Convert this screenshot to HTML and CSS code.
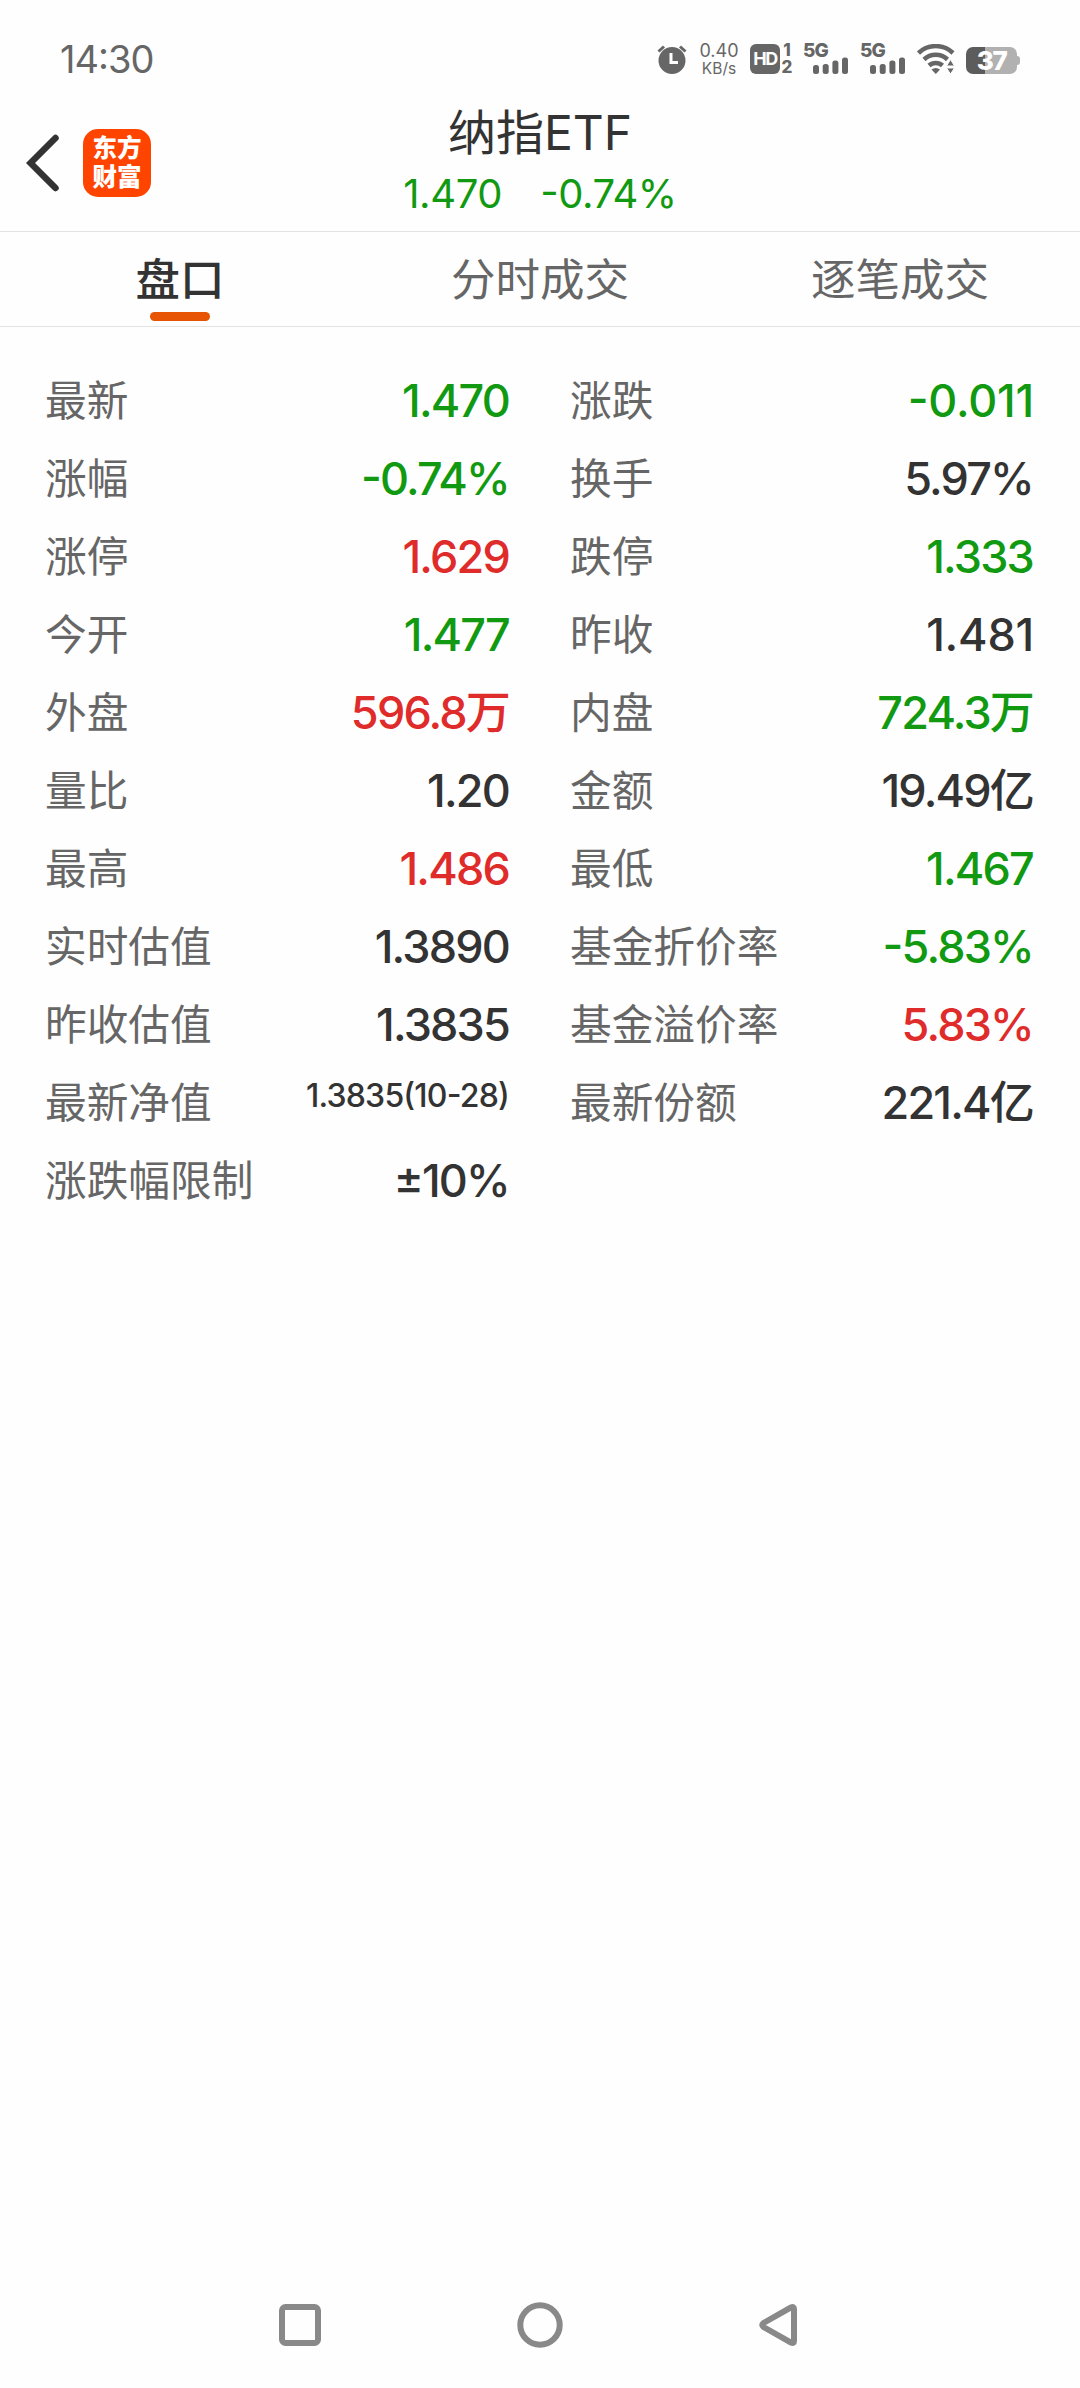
FILE: index.html
```
<!DOCTYPE html>
<html lang="zh-CN">
<head>
<meta charset="UTF-8">
<title>纳指ETF</title>
<link rel="stylesheet" href="styles.css">
</head>
<body>

  <div class="status-bar">
    <div class="time">14:30</div>
    <div class="status-icons">
      <svg class="alarm" width="30" height="30" viewBox="0 0 30 30">
        <circle cx="15" cy="16.5" r="13.5" fill="#666"/>
        <path d="M1.5 7.5L7 2.5M28.5 7.5L23 2.5" stroke="#666" stroke-width="3" fill="none"/>
        <path d="M14 9v9.5h7" stroke="#fff" stroke-width="3" fill="none"/>
      </svg>
      <div class="speed"><span class="speed-num">0.40</span><span class="speed-unit">KB/s</span></div>
      <div class="hd">HD</div>
      <div class="sims"><span>1</span><span>2</span></div>
      <div class="signal">
        <span class="net">5G</span>
        <svg width="36" height="17" viewBox="0 0 36 17" fill="#666">
          <rect x="0" y="8" width="6" height="9" rx="2.5"/>
          <rect x="9.7" y="7" width="6" height="10" rx="2.5"/>
          <rect x="19.4" y="3.5" width="6" height="13.5" rx="2.5"/>
          <rect x="29" y="0.5" width="6" height="16.5" rx="2.5"/>
        </svg>
      </div>
      <div class="signal">
        <span class="net">5G</span>
        <svg width="36" height="17" viewBox="0 0 36 17" fill="#666">
          <rect x="0" y="8" width="6" height="9" rx="2.5"/>
          <rect x="9.7" y="7" width="6" height="10" rx="2.5"/>
          <rect x="19.4" y="3.5" width="6" height="13.5" rx="2.5"/>
          <rect x="29" y="0.5" width="6" height="16.5" rx="2.5"/>
        </svg>
      </div>
      <svg class="wifi" width="38" height="30" viewBox="0 0 38 30" fill="none" stroke="#666" stroke-width="4.5">
        <path d="M1.5 9A25 25 0 0 1 36 9"/>
        <path d="M7 15.5A17 17 0 0 1 30.5 15.5"/>
        <path d="M12 21.5A10 10 0 0 1 25.5 21.5"/>
        <path d="M14.5 25.5q4.2 -3 8.5 0L18.8 30z" fill="#666" stroke="none"/>
        <path d="M29.5 22L33.5 15.5L37.5 22zM29.5 24L33.5 30L37.5 24z" fill="#666" stroke="#fff" stroke-width="1"/>
      </svg>
      <div class="battery"><span>37</span></div>
    </div>
  </div>

  <div class="header">
    <div class="header-left">
      <svg width="34" height="58" viewBox="0 0 34 58">
        <path d="M29.5 4L4.5 29L29.5 54" fill="none" stroke="#333" stroke-width="6.5" stroke-linecap="round"/>
      </svg>
      <div class="logo">东方<br>财富</div>
    </div>
    <div class="header-title">
      <div class="stock-name">纳指ETF</div>
      <div class="stock-price"><span>1.470</span><span>-0.74%</span></div>
    </div>
  </div>

  <div class="tabs">
    <div class="tab active"><span>盘口</span></div>
    <div class="tab"><span>分时成交</span></div>
    <div class="tab"><span>逐笔成交</span></div>
  </div>

  <div class="quote-list">
    <div class="item"><span class="label">最新</span><span class="value green">1.470</span></div>
    <div class="item"><span class="label">涨跌</span><span class="value green loose">-0.011</span></div>
    <div class="item"><span class="label">涨幅</span><span class="value green">-0.74%</span></div>
    <div class="item"><span class="label">换手</span><span class="value">5.97%</span></div>
    <div class="item"><span class="label">涨停</span><span class="value red">1.629</span></div>
    <div class="item"><span class="label">跌停</span><span class="value green">1.333</span></div>
    <div class="item"><span class="label">今开</span><span class="value green">1.477</span></div>
    <div class="item"><span class="label">昨收</span><span class="value loose">1.481</span></div>
    <div class="item"><span class="label">外盘</span><span class="value red">596.8万</span></div>
    <div class="item"><span class="label">内盘</span><span class="value green">724.3万</span></div>
    <div class="item"><span class="label">量比</span><span class="value">1.20</span></div>
    <div class="item"><span class="label">金额</span><span class="value">19.49亿</span></div>
    <div class="item"><span class="label">最高</span><span class="value red">1.486</span></div>
    <div class="item"><span class="label">最低</span><span class="value green">1.467</span></div>
    <div class="item"><span class="label">实时估值</span><span class="value">1.3890</span></div>
    <div class="item"><span class="label">基金折价率</span><span class="value green">-5.83%</span></div>
    <div class="item"><span class="label">昨收估值</span><span class="value">1.3835</span></div>
    <div class="item"><span class="label">基金溢价率</span><span class="value red">5.83%</span></div>
    <div class="item"><span class="label">最新净值</span><span class="value small">1.3835(10-28)</span></div>
    <div class="item"><span class="label">最新份额</span><span class="value">221.4亿</span></div>
    <div class="item"><span class="label">涨跌幅限制</span><span class="value">±10%</span></div>
  </div>

  <div class="nav-bar">
    <svg width="48" height="48" viewBox="0 0 48 48"><rect x="6" y="6" width="36" height="36" rx="3.5"/></svg>
    <svg width="48" height="48" viewBox="0 0 48 48"><circle cx="24" cy="24" r="19.7"/></svg>
    <svg width="48" height="48" viewBox="0 0 48 48"><path d="M7.5 22L35 6.5Q38 5 38 8V40Q38 43 35 41.5L7.5 26Q5 24 7.5 22z"/></svg>
  </div>

</body>
</html>
```
FILE: styles.css
```
* {
  box-sizing: border-box;
}
body {
  margin: 0;
  width: 1080px;
  height: 2388px;
  display: flex;
  flex-direction: column;
  background-color: #fefefe;
  color: #333;
  font-family: Inter, "Noto Sans CJK SC", sans-serif;
  font-feature-settings: "case";
}
svg {
  display: block;
  flex: none;
}

/* status bar */
.status-bar {
  height: 118px;
  padding: 0 60px;
  display: flex;
  justify-content: space-between;
  align-items: center;
  color: #666;
}
.time {
  font-size: 38px;
  letter-spacing: -1px;
}
.status-icons {
  display: flex;
  height: 30px;
  align-items: stretch;
}
.speed {
  width: 40px;
  margin: -2px 0 -4px 12px;
  display: flex;
  flex-direction: column;
  justify-content: space-between;
  align-items: center;
}
.speed-num {
  font-size: 18px;
  line-height: 18px;
}
.speed-unit {
  font-size: 15.5px;
  line-height: 18px;
}
.hd {
  width: 30px;
  margin-left: 11px;
  border-radius: 6px;
  background-color: #666;
  color: #fff;
  font-size: 18px;
  font-weight: 700;
  line-height: 30px;
  text-align: center;
  letter-spacing: -1.5px;
}
.sims {
  width: 12px;
  margin-left: 1px;
  display: flex;
  flex-direction: column;
  justify-content: space-between;
  align-items: center;
  font-size: 17px;
  font-weight: 800;
  line-height: 13px;
}
.signal {
  width: 46px;
  margin-left: 10px;
  display: flex;
  flex-direction: column;
  justify-content: space-between;
}
.signal + .signal {
  margin-left: 11px;
}
.net {
  height: 13px;
  font-size: 19px;
  font-weight: 800;
  letter-spacing: -1px;
  line-height: 14px;
}
.signal svg {
  align-self: flex-end;
}
.wifi {
  margin-left: 11px;
}
.battery {
  width: 51px;
  height: 27px;
  margin: 3px 3px 0 11px;
  border-radius: 7px;
  background: linear-gradient(to right, #5c5c5c 19px, #b1b1b1 19px);
  color: #fff;
  font-size: 26px;
  font-weight: 800;
  line-height: 28px;
  text-align: center;
  letter-spacing: -1.5px;
  position: relative;
}
.battery::after {
  content: "";
  position: absolute;
  left: 51px;
  top: 9px;
  width: 3px;
  height: 9px;
  border-radius: 0 3px 3px 0;
  background-color: #b1b1b1;
}

/* title */
.header {
  height: 114px;
  display: grid;
  grid-template-columns: 1fr 400px 1fr;
  border-bottom: 1px solid #e3e3e3;
}
.header-left {
  height: 90px;
  padding-left: 26px;
  display: flex;
  align-items: center;
  gap: 23px;
}
.logo {
  width: 68px;
  height: 68px;
  padding-top: 5px;
  border-radius: 15px;
  background-color: #ff4400;
  color: #fff;
  font-size: 24.5px;
  font-weight: 900;
  line-height: 29px;
  text-align: center;
}
.header-title {
  text-align: center;
}
.stock-name {
  height: 51px;
  font-size: 48px;
  line-height: 30px;
}
.stock-price {
  display: flex;
  justify-content: center;
  gap: 38px;
  font-size: 40px;
  letter-spacing: -0.4px;
  line-height: 50px;
  color: #119a11;
}

/* tabs */
.tabs {
  height: 95px;
  display: grid;
  grid-template-columns: repeat(3, 1fr);
  border-bottom: 1px solid #e3e3e3;
}
.tab {
  display: flex;
  flex-direction: column;
  align-items: center;
  padding-top: 17px;
  font-size: 44.5px;
  line-height: 63px;
  color: #666;
}
.tab.active {
  font-weight: 500;
  color: #333;
}
.tab.active::after {
  content: "";
  width: 60px;
  height: 9px;
  border-radius: 5px;
  background-color: #e65404;
}

/* quotes */
.quote-list {
  padding: 35px 45px 0;
  display: grid;
  grid-template-columns: 465px 464px;
  column-gap: 60px;
  grid-auto-rows: 78px;
  flex: 1;
  align-content: start;
}
.item {
  display: flex;
  justify-content: space-between;
  line-height: 78px;
}
.label {
  font-size: 41.7px;
  color: #666;
}
.value {
  margin-right: 1px;
  font-size: 45px;
  font-weight: 500;
  letter-spacing: -1.8px;
}
.value.loose {
  margin-right: 0;
  letter-spacing: -0.2px;
}
.value.small {
  font-size: 32px;
  letter-spacing: -0.8px;
  line-height: 64px;
}
.red {
  color: #e02b2b;
}
.green {
  color: #119a11;
}

/* system navigation */
.nav-bar {
  height: 126px;
  padding: 0 180px;
  display: flex;
  justify-content: space-around;
  align-items: center;
}
.nav-bar svg {
  fill: none;
  stroke: #898989;
  stroke-width: 6;
}
```
